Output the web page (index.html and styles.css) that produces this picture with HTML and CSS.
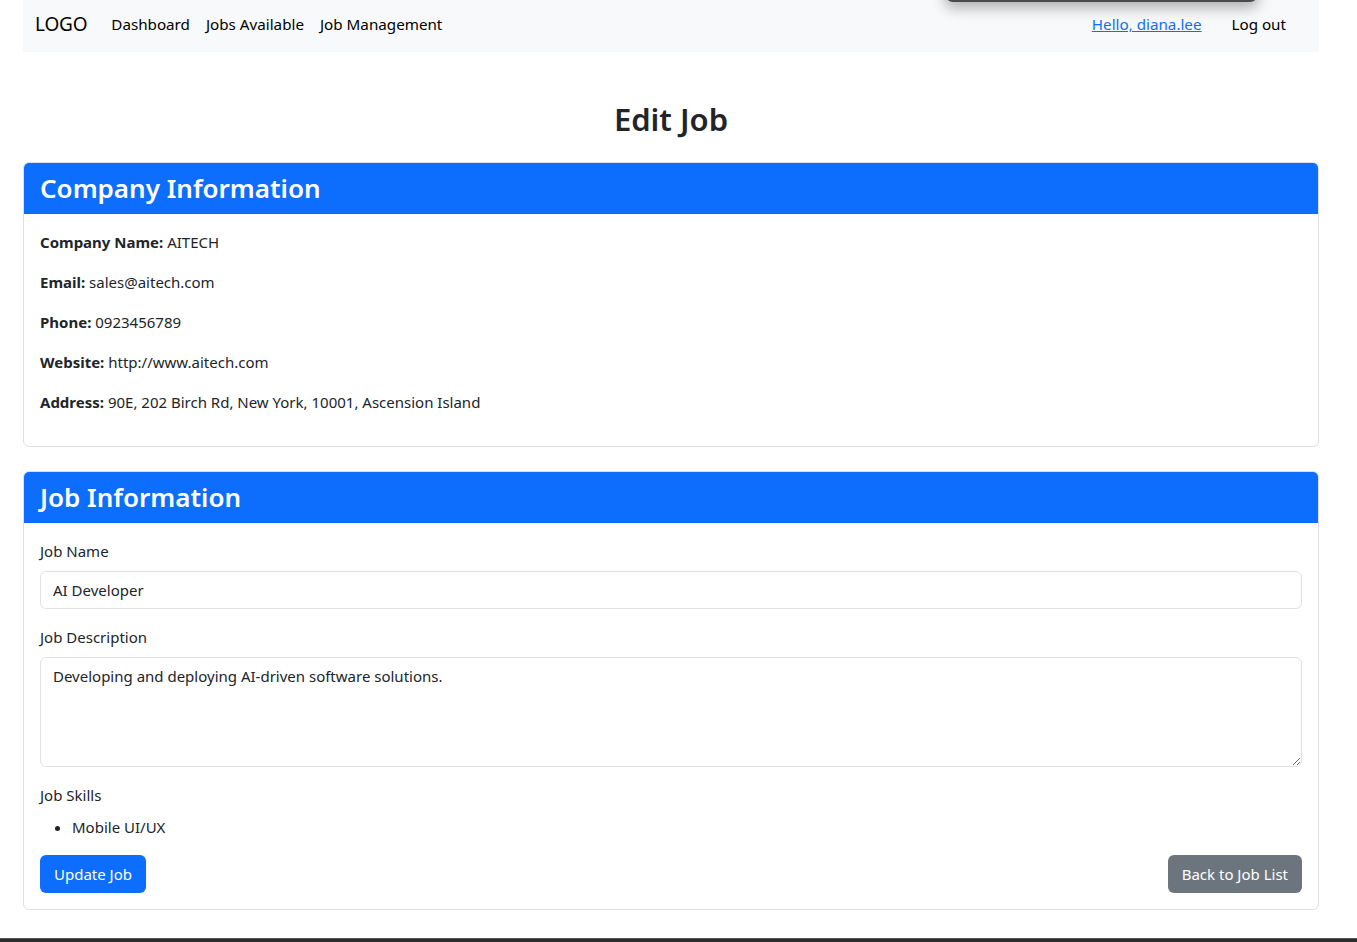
FILE: index.html
```html
<!DOCTYPE html>
<html lang="en">
<head>
<meta charset="utf-8">
<title>Edit Job</title>
<link rel="stylesheet" href="styles.css">
</head>
<body>
<div class="page">
  <div class="container">
    <nav class="navbar">
      <a class="brand" href="#">LOGO</a>
      <ul class="nav">
        <li><a class="nav-link" href="#">Dashboard</a></li>
        <li><a class="nav-link" href="#">Jobs Available</a></li>
        <li><a class="nav-link" href="#">Job Management</a></li>
      </ul>
      <div class="nav-right">
        <a class="hello" href="#">Hello, diana.lee</a>
        <a class="logout" href="#">Log out</a>
      </div>
    </nav>

    <h2 class="title">Edit Job</h2>

    <section class="card">
      <h3 class="card-header">Company Information</h3>
      <div class="card-body">
        <p><strong>Company Name:</strong> AITECH</p>
        <p><strong>Email:</strong> sales@aitech.com</p>
        <p><strong>Phone:</strong> 0923456789</p>
        <p><strong>Website:</strong> http://www.aitech.com</p>
        <p><strong>Address:</strong> 90E, 202 Birch Rd, New York, 10001, Ascension Island</p>
      </div>
    </section>

    <section class="card">
      <h3 class="card-header">Job Information</h3>
      <form class="card-body">
        <div class="field">
          <label class="label" for="jobName">Job Name</label>
          <input class="control" id="jobName" type="text" value="AI Developer">
        </div>
        <div class="field">
          <label class="label" for="jobDesc">Job Description</label>
          <textarea class="control area" id="jobDesc" rows="4">Developing and deploying AI-driven software solutions.</textarea>
        </div>
        <div class="field">
          <label class="label">Job Skills</label>
          <ul class="skills">
            <li>Mobile UI/UX</li>
          </ul>
        </div>
        <div class="actions">
          <button type="button" class="btn btn-primary">Update Job</button>
          <button type="button" class="btn btn-secondary">Back to Job List</button>
        </div>
      </form>
    </section>
  </div>
</div>
<div class="popup"></div>
<div class="bottom-bar"></div>
</body>
</html>
```
FILE: styles.css
```css
* { box-sizing: border-box; }
html, body { margin: 0; padding: 0; }
body {
  font-family: "Noto Sans", "Open Sans", sans-serif;
  font-size: 15px;
  line-height: 24px;
  color: #212529;
  background: #fff;
}
.page { width: 1342px; }
.container { width: 1296px; margin: 0 auto; }

.navbar {
  display: flex;
  align-items: center;
  height: 52px;
  background: #f8f9fa;
  padding: 0 12px 4px 12px;
}
.brand {
  font-size: 19px;
  color: #000;
  text-decoration: none;
  margin-right: 16px;
  letter-spacing: -0.2px;
}
.nav { list-style: none; display: flex; margin: 0; padding: 0; }
.nav-link {
  display: block;
  padding: 0 8px;
  color: #000;
  text-decoration: none;
  font-size: 15.2px;
}
.nav-right { margin-left: auto; display: flex; align-items: center; margin-right: 21px; font-size: 15.2px; }
.hello { color: #0d6efd; text-decoration: underline; }
.logout { color: #000; text-decoration: none; margin-left: 30px; }

.title {
  text-align: center;
  font-size: 31px;
  font-weight: 600;
  line-height: 38px;
  margin: 48px 0 24px;
}

.card {
  border: 1px solid #dcdfe3;
  border-radius: 6px;
  margin-bottom: 24px;
  overflow: hidden;
}
.card-header {
  margin: 0;
  background: #0d6efd;
  color: #fff;
  font-size: 26px;
  font-weight: 600;
  line-height: 51px;
  height: 51px;
  padding: 0 16px;
}
.card-body { padding: 16px; display: block; margin: 0; }
.card-body p { margin: 0 0 16px; }
.card-body strong { font-weight: 700; }

.field { margin-bottom: 16px; }
.label { display: block; margin-bottom: 8px; }
.control {
  display: block;
  width: 100%;
  height: 38px;
  padding: 6px 12px;
  font: inherit;
  color: #212529;
  border: 1px solid #dee2e6;
  border-radius: 6px;
  background: #fff;
}
.area { height: 110px; resize: vertical; }
.skills { margin: 0; padding-left: 32px; }

.actions { display: flex; justify-content: space-between; }
.btn {
  font: inherit;
  height: 38px;
  padding: 0 14px;
  border: none;
  border-radius: 6px;
  color: #fff;
  cursor: pointer;
}
.btn-primary { background: #0d6efd; }
.btn-secondary { background: #6c757d; }

.popup {
  position: absolute;
  top: -40px;
  left: 945px;
  width: 313px;
  height: 42px;
  background: #4a4a4a;
  border-radius: 0 0 8px 8px;
  box-shadow: 0 6px 14px rgba(0, 0, 0, 0.3);
}
.bottom-bar {
  position: fixed;
  left: 0;
  right: 0;
  bottom: 0;
  height: 4px;
  background: #2d2d2d;
  border-top: 1px solid #555;
}
```
